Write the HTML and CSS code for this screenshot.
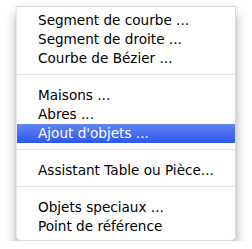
FILE: index.html
```html
<!DOCTYPE html>
<html>
<head>
<meta charset="utf-8">
<link rel="stylesheet" href="styles.css">
</head>
<body>
<div class="menu">
  <div class="item">Segment de courbe ...</div>
  <div class="item">Segment de droite ...</div>
  <div class="item">Courbe de Bézier ...</div>
  <div class="sep"></div>
  <div class="item">Maisons ...</div>
  <div class="item">Abres ...</div>
  <div class="item active">Ajout d'objets ...</div>
  <div class="sep"></div>
  <div class="item">Assistant Table ou Pièce...</div>
  <div class="sep"></div>
  <div class="item">Objets speciaux ...</div>
  <div class="item">Point de référence</div>
</div>
</body>
</html>
```
FILE: styles.css
```css
html, body {
  margin: 0;
  background: #ffffff;
}
body {
  padding: 6px 0 0 16px;
  font-family: "DejaVu Sans", "Liberation Sans", sans-serif;
  font-size: 13.6px;
  color: #000;
}
.menu {
  width: 218px;
  background: #fff;
  border: 1px solid #dadada;
  border-left-color: #e6e6e6;
  border-radius: 0 0 5px 5px;
  padding: 4px 0;
  box-shadow: 0 8px 12px rgba(0, 0, 0, 0.32), 0 0 3px rgba(0, 0, 0, 0.08);
}
.item {
  height: 19px;
  line-height: 19px;
  padding-left: 21px;
  white-space: nowrap;
}
.item.active {
  color: #fff;
  background: linear-gradient(#6385f3, #2c57ee);
}
.sep {
  height: 12px;
}
.sep::after {
  content: "";
  display: block;
  height: 1px;
  background: #e3e3e3;
  margin-top: 6px;
}
```
